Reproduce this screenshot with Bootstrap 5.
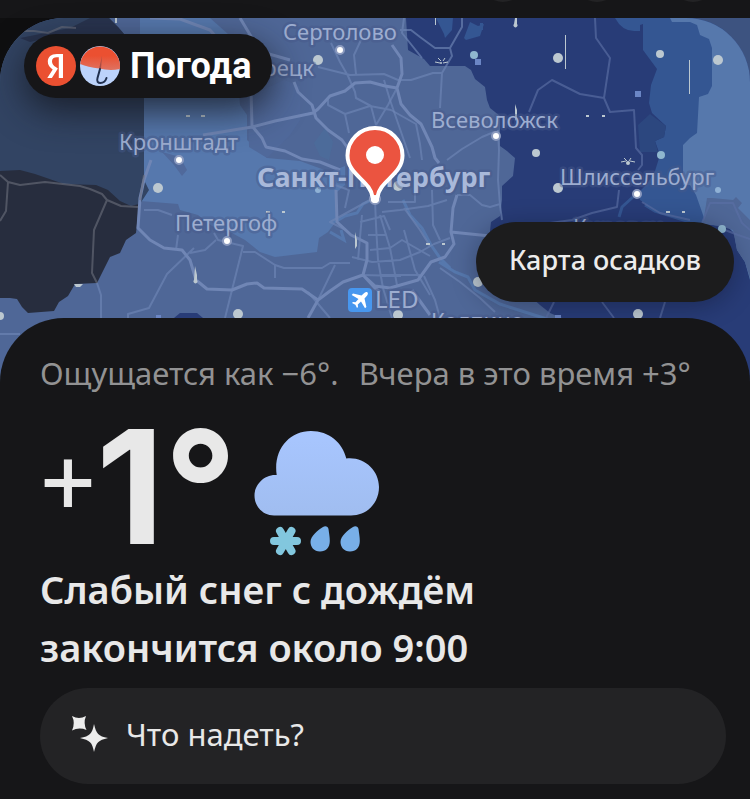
<!DOCTYPE html>
<html lang="ru" data-bs-theme="dark">
<head>
<meta charset="utf-8">
<meta name="viewport" content="width=device-width, initial-scale=1">
<title>Погода</title>
<link href="https://cdn.jsdelivr.net/npm/bootstrap@5.3.0/dist/css/bootstrap.min.css" rel="stylesheet">
<style>
  body { background: #161618; color: #e8e8e8; font-family: "Noto Sans", "Open Sans", sans-serif; min-height: 100vh; }
  .top-strip { height: 18px; background: #161618; }
  .top-strip svg { height: 18px; }
  .map-area { height: 380px; background: linear-gradient(90deg, #0f0f10 50%, #3d5380 50%); }
  .map-clip { border-radius: 64px 64px 0 0; }
  .map-overlay { height: 300px; padding: 16px; }
  .brand-pill { background: #161618; border-radius: 32px; height: 64px; margin-left: 8px; padding: 0 20px 0 12px; gap: 4px; box-shadow: 0 12px 36px rgba(20, 22, 30, .8); }
  .brand-name { font: 700 36px/66px Roboto, sans-serif; color: #fff; margin-left: 6px; }
  .map-btn { background: #1c1c1d; color: #ececec; border: 0; border-radius: 40px; height: 80px; padding: 0 33px 4px; font-size: 27px; font-weight: 500; box-shadow: 0 4px 24px rgba(10, 12, 30, .35); }
  .map-btn:hover { background: #28282a; color: #fff; }
  .weather-panel { background: #161618; border-radius: 64px 64px 0 0; margin-top: -80px; padding: 32px 24px 14px 40px; }
  .feels { font-size: 31px; line-height: 46px; color: #929293; gap: 0 20px; }
  .now { height: 164px; }
  .temp { font: 700 158px/146px Inter, sans-serif; }
  .temp-sign { font: 500 98px/160px "Noto Sans", sans-serif; }
  .forecast { color: #e8e8e8; font-size: 38px; line-height: 58px; font-weight: 580; }
  .ask-btn { background: #232325; color: #e8e8e8; border: 0; border-radius: 48px; height: 96px; margin-top: 12px; padding: 0 32px 2px; gap: 18px; font-size: 31px; }
  .ask-btn span { padding-bottom: 2px; }
  .ask-btn:hover { background: #2c2c2e; color: #fff; }
  .town { font: 400 22px "Noto Sans", sans-serif; fill: #9dadd0; stroke: #46598a; stroke-width: 5px; stroke-opacity: .45; stroke-linejoin: round; paint-order: stroke; }
  .airport { font-size: 24px; }
  .city { font-weight: 700; font-size: 27px; fill: #a9b9da; }
</style>
</head>
<body>
<div class="top-strip overflow-hidden">
  <svg class="d-block w-100" viewBox="0 0 750 18" preserveAspectRatio="xMidYMin slice" aria-hidden="true">
    <g fill="#232325"><circle cx="503" cy="-20" r="22"/><circle cx="597" cy="-20" r="22"/><circle cx="693" cy="-20" r="22"/></g>
  </svg>
</div>

<header class="map-area position-relative">
  <svg class="map-clip d-block w-100 h-100" viewBox="0 18 750 380" preserveAspectRatio="xMidYMin slice" role="img" aria-label="Карта осадков">
    <rect y="18" width="750" height="380" fill="#4f6797"/>
    <!-- gulf and river -->
    <path fill="#5678ad" d="M110 18H210L228 34L236 60L240 105L247 115L247 140L267 158L300 161L330 172L345 166L345 185L337 192L337 220L328 232L319 238L317 252L275 257L260 252L245 240L230 232L212 226L198 215L180 210L178 204L153 202L140 201V18Z"/>
    <path fill="none" stroke="#5678ad" stroke-width="3" d="M335 222L345 216L357 213L363 204L374 199M330 232L344 240L341 230M403 200L410 215L422 228L431 245L440 258L450 268M439 262L455 272L468 277L475 290L500 304L550 320"/>
    <path fill="#50699b" d="M162 152L180 157L187 170L182 176L174 165ZM248 100L267 88L284 80L300 86V120L290 135L267 158L249 147Z"/>
    <path fill="#4b6e9b" opacity=".7" d="M314 143L325 128L333 142L329 160L320 156Z"/>
    <!-- western area without rain data -->
    <path fill="#324463" d="M0 18H109L118 27L124 34V98H144V180L149 190L138 207L100 204L0 180Z"/>
    <path fill="#28334e" d="M20 38L70 28L90 18H109L118 27L124 34V40L60 35L30 42Z"/>
    <path fill="#272d3e" d="M0 171L20 170L35 174L64 184L96 185L108 190L120 201L131 206L139 204L136 233L126 240L120 253L110 257L97 283L75 284L68 296L59 302L54 311L28 313L22 307L17 299L10 298H0Z"/>
    <!-- rain zones -->
    <path fill="#283c77" d="M406 18H750V398H600L562 318L550 313L540 305L530 296L489 240L491 222L500 216L502 200V186L513 176L515 158L507 151L500 146V116L490 108L487 100L485 87L475 79L471 70L465 66H430L424 59L408 50Z"/>
    <path fill="#345692" d="M436 18L444 34L445 38L452 30L453 18ZM464 38L470 22L478 26L484 24L480 36L466 40ZM480 23H483V30H480Z"/>
    <path fill="#345692" d="M615 18Q622 31 634 31H640V25L643 24V50L657 69L651 85L649 103L652 113L666 126L664 137L655 141L660 155L655 171L647 184L638 193L640 200L655 210L690 222L706 224L725 200V18Z"/>
    <path fill="#2c477f" d="M638 125L650 114L666 126L664 137L655 141L658 152H640Z"/>
    <path fill="none" stroke="#345692" stroke-width="3" d="M619 217L622 207L633 197M645 205L655 211L690 222"/>
    <path fill="#5678ac" d="M670 18L672 22H690L697 25L700 35L709 39L712 48V86L708 94L699 97L697 133L690 138L683 145V185H690L696 195L702 212L706 224L728 227L734 233L737 250L745 262L750 280V18Z"/>
    <path fill="#4f6797" d="M703 224L707 198L712 198L733 200L736 197L742 203L738 208L750 220V278L745 262L737 250L733 230L720 226Z"/>
    <path fill="#283c77" d="M174 318L180 313H197L203 318Z"/>
    <!-- main roads -->
    <g fill="none" stroke="#7086b5" stroke-width="3" stroke-linejoin="round">
      <path d="M240 18L252 38L262 52L290 60M150 18L180 19L210 30L245 70L251 90L252 126L262 138L266 147L285 151L302 159L320 162L340 170M203 135L252 127L275 121L313 113L318 109L330 96L345 91L355 83L370 82L385 86L397 88L402 74L401 58L392 45M294 82L298 92L312 105L316 118L328 130L342 140L352 154M397 88L401 104L410 115L421 124L432 147L435 158L439 163"/>
      <path d="M151 160L144 180L140 198L138 228L150 240L164 248L182 250L190 260L196 280L207 289L232 290L247 284L257 283L264 288L302 289L318 300L330 291L343 282L363 275L375 286L390 288L418 280L431 262L445 257L454 244L451 232L453 208L457 195M336 190L337 222L351 235L367 243L367 260L363 275M363 275L374 287L380 292M318 300L308 318M451 232L490 236M412 290L430 315"/>
    </g>
    <!-- minor roads -->
    <g fill="none" stroke="#6f86b5" stroke-opacity=".65" stroke-width="2" stroke-linejoin="round">
      <path d="M331 43L340 62L348 76L355 92L356 98L371 106L376 125M318 67L350 75L384 74L398 80L411 80L433 73L442 73M361 40L354 55L356 74M397 88L388 105L376 125M328 97L328 105L345 114L370 106L391 110L416 124L420 144L422 160M345 114L349 133M442 73L440 108M447 160L462 149L482 137L494 132M404 18L402 33L422 58M400 30H411L420 37L435 48H450L452 56L442 73M450 48L462 27V18"/>
      <path d="M144 210H158L172 215M178 235L176 250M194 248L167 274L149 308L128 314V318M214 233L218 240L243 246L225 318M190 253L205 250L216 240M243 252H255L275 265L284 268L322 268L330 263H350M318 300L335 265M97 283L101 295L101 398M0 334H20M275 265V278M308 292L330 318"/>
      <path d="M375 200L376 225L378 260L383 288L392 318M362 215L358 260M380 215L390 248L397 285M360 222L384 216L390 230M352 257L372 262L400 260L420 252L434 244L450 238M368 235H386M370 250L390 248L402 240L430 256M380 275H420M404 230L415 270L430 295M362 275L401 276M388 202H415V190M382 212L400 210L428 206L447 200M432 190L433 225L440 240M345 208L349 190L335 185M346 230L330 222L370 200M404 208L420 230L430 246M457 195H470L482 205L490 207L500 204M498 130L499 150L498 180L500 205L502 220M440 268L460 282L480 298L495 312M424 276L435 300L440 318M384 80L390 100L410 158"/>
    </g>
    <g fill="none" stroke="#6c6f7d" stroke-opacity=".6" stroke-width="2" stroke-linejoin="round">
      <path d="M15 31H34L48 33L62 27L76 28M0 175L8 182L20 185L45 182L80 186L90 189L102 194L107 200L121 206L138 207M8 182L6 211L0 221M107 200L94 230L92 273L97 283M144 175L140 200"/>
    </g>
    <g fill="none" stroke="#5b6fa4" stroke-opacity=".65" stroke-width="2" stroke-linejoin="round">
      <path d="M595 18L596 38L610 58L604 98L580 94L552 80L538 90L529 112M604 98L610 112L634 110L636 148L642 155V165L638 170M550 223L572 220L592 213L617 207L619 190M642 202L660 213L690 220M702 223L710 203H733L742 223L750 230M725 230L738 235L750 239M554 302L546 318M602 302L614 318M665 302L660 318"/>
    </g>
    <!-- rain and snow marks -->
    <g fill="#bcc8d0">
      <circle cx="318" cy="60" r="5"/><circle cx="558" cy="58" r="5"/><circle cx="660" cy="54" r="4"/><circle cx="718" cy="60" r="5"/>
      <circle cx="536" cy="153" r="4"/><circle cx="661" cy="155" r="4" fill="#8fb7cf"/><circle cx="158" cy="188" r="5"/><circle cx="558" cy="188" r="5"/>
      <circle cx="398" cy="186" r="5"/><circle cx="478" cy="282" r="5"/><circle cx="238" cy="314" r="5"/><circle cx="398" cy="315" r="5"/><circle cx="638" cy="314" r="5"/>
      <circle cx="0" cy="316" r="4"/><circle cx="722" cy="229" r="4" fill="#8fb7cf"/><circle cx="474" cy="55" r="4" fill="#8fb7cf"/><circle cx="718" cy="190" r="3" fill="#8fb1d5"/><circle cx="318" cy="190" r="3" fill="#8fb1d5"/>
      <path d="M115 18H117V23H115ZM515 18H517V24A2 2 0 1 1 514 24ZM565 35H566V69H565ZM689 60H690V94H689ZM515 104L517 110V118L515 121ZM435 18H436V25H435ZM355 232L357 240V246L355 249ZM195 266L197 275V280A2 2 0 1 1 194 280Z"/>
      <path d="M186 115H190V117H186ZM201 115H205V117H201ZM586 115H589V117H586ZM602 115H605V117H602ZM266 211H270V213H266ZM282 211H285V213H282ZM426 243H430V245H426ZM442 243H445V245H442ZM666 211H670V213H666ZM682 211H685V213H682ZM74 284H83L80 287H76Z"/>
      <path fill="none" stroke="#bcc8d0" stroke-width="1" d="M435 62L440 63M448 62L443 63M438 58L441 61M445 58L443 61M621 162L626 161M635 162L630 161M624 158L627 161M631 158L629 161"/>
      <circle cx="441" cy="63" r="1"/><circle cx="628" cy="163" r="2"/>
    </g>
    <g fill="#6b86c5"><rect x="475" y="59" width="6" height="6"/><rect x="635" y="91" width="6" height="6"/><rect x="156" y="315" width="5" height="4"/><rect x="555" y="315" width="6" height="4"/></g>
    <!-- towns -->
    <g class="town">
      <text x="283" y="40">Сертолово</text>
      <text x="314" y="76" text-anchor="end">рецк</text>
      <text x="431" y="128">Всеволожск</text>
      <text x="119" y="150">Кронштадт</text>
      <text x="175" y="231">Петергоф</text>
      <text x="560" y="185">Шлиссельбург</text>
      <text x="431" y="329">Колпино</text>
      <text x="573" y="235">Кировск</text>
      <text class="airport" x="375" y="308">LED</text>
      <text class="city" x="257" y="187">Санкт-Петербург</text>
    </g>
    <g fill="#fff" stroke="#8b9abf" stroke-width="2">
      <circle cx="340" cy="50" r="4"/><circle cx="496" cy="136" r="4"/><circle cx="179" cy="160" r="4"/><circle cx="227" cy="241" r="4"/><circle cx="637" cy="194" r="4"/><circle cx="375" cy="199" r="5"/>
    </g>
    <rect x="348" y="288" width="24" height="24" rx="4" fill="#4797ef"/>
    <path fill="#fff" d="M367.500 292.400C366.500 291.500 365 292.400 364 293.300L361.500 295.500L353 293.500L351.700 295L358.500 299L355.500 302.300L353 302L352 303L355.400 304.700L357 308L358 307L357.800 304.500L361 301.500L365 308.300L366.400 307L364.500 298.500L366.700 296C367.600 295 368.400 293.400 367.500 292.400Z"/>
    <!-- current place -->
    <path fill="#eb5440" stroke="#fff" stroke-width="4" stroke-linejoin="round" d="M375 128A27.500 27.500 0 0 0 347.500 155.500C347.500 175 371 181 372.500 197Q375 202 377.500 197C379 181 402.500 175 402.500 155.500A27.500 27.500 0 0 0 375 128Z"/>
    <circle cx="375" cy="199" r="4" fill="#fff"/>
    <circle cx="375" cy="155" r="9" fill="#fff"/>
  </svg>

  <div class="map-overlay position-absolute top-0 start-0 w-100 d-flex flex-column justify-content-between">
    <a class="brand-pill d-flex align-items-center align-self-start text-decoration-none" href="#" aria-label="Яндекс Погода">
      <svg width="40" height="40" viewBox="0 0 40 40" aria-hidden="true">
        <circle cx="20" cy="20" r="20" fill="#eb5031"/>
        <path fill="#fff" d="M22.800 32H27V8H20.900C15 8 11.800 11 11.800 15.600C11.800 19.200 13.600 21.300 16.700 23.500L11.300 32H15.900L21.900 22.500L19.800 21.100C17.300 19.400 16 18 16 15.200C16 12.700 17.800 11.300 20.900 11.300H22.800Z"/>
      </svg>
      <svg width="40" height="40" viewBox="0 0 40 40" aria-hidden="true">
        <defs><linearGradient id="dome" x1="0" y1="0" x2="0" y2="1"><stop offset=".4" stop-color="#eb5031"/><stop offset="1" stop-color="#df7260"/></linearGradient></defs>
        <circle cx="20" cy="20" r="20" fill="#bcd3fb"/>
        <path fill="url(#dome)" d="M0.200 18A20 20 0 0 1 39.900 23Q30 25 19 22.500Q8 21 .2 18Z"/>
        <path fill="#a94c43" d="M22 10L19 23L21 23Z"/>
        <path fill="none" stroke="#20304f" stroke-width="2" stroke-linecap="round" d="M20 23L17.500 32C16.500 35.500 18 37 20.500 37C24 37 25.500 35 26.500 32"/>
      </svg>
      <span class="brand-name">Погода</span>
    </a>
    <button class="map-btn btn align-self-end" type="button">Карта осадков</button>
  </div>
</header>

<main class="weather-panel position-relative">
  <div class="feels d-flex flex-wrap">
    <span>Ощущается как −6°.</span>
    <span>Вчера в это время +3°</span>
  </div>
  <div class="now d-flex align-items-end">
    <div class="temp d-flex align-items-end"><span class="temp-sign">+</span><span>1°</span></div>
    <svg class="ms-3 mb-1" width="128" height="128" viewBox="252 428 128 128" role="img" aria-label="Снег с дождём">
      <defs><linearGradient id="cloud" x1="0" y1="0" x2="0" y2="1"><stop offset="0" stop-color="#a8c6ff"/><stop offset="1" stop-color="#a0bdf0"/></linearGradient></defs>
      <path fill="url(#cloud)" d="M273 515.500C262 515.500 253.500 506.500 253.500 495.500C253.500 484 264 474 275.700 475C272 450 288 431 310 431C328 431 341.500 442.500 345.300 458.500C363 456.500 378 470 378 487C378 503 366 515.500 350 515.500Z"/>
      <path stroke="#82c7de" stroke-width="8" stroke-linecap="round" d="M273 541H296M279 531L290.500 551M290.500 531L279 551"/>
      <path id="drop" fill="#78afe8" d="M322 527C324 525.500 327 526 327.500 529C328 533 328.800 537 328.800 541C328.800 547.500 325 551.500 319 551.500C313 551.500 309.500 547 309.500 542C309.500 536 317 530 322 527Z"/>
      <use href="#drop" x="30"/>
    </svg>
  </div>
  <h1 class="forecast mb-0">Слабый снег с дождём<br>закончится около 9:00</h1>
  <button class="ask-btn btn d-flex align-items-center w-100" type="button">
    <svg width="36" height="38" viewBox="0 0 36 38" fill="#ececec" aria-hidden="true">
      <path d="M0 0Q7 4 14 0Q11 7 14.500 14Q7 11 0 14.500Q3.500 7 0 0Z"/>
      <path d="M22 8C24.500 18 26 20 36 22C26 24.500 24.500 26 22 36C20 26 18 24.500 8 22C18 20 20 18 22 8Z"/>
    </svg>
    <span>Что надеть?</span>
  </button>
</main>
<script src="https://cdn.jsdelivr.net/npm/bootstrap@5.3.0/dist/js/bootstrap.bundle.min.js"></script>
</body>
</html>
